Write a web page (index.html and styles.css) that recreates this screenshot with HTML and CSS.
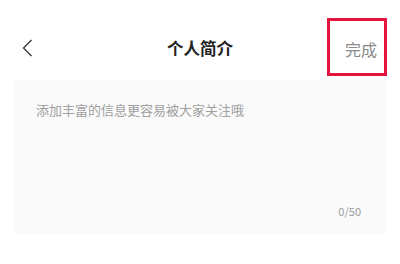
FILE: index.html
```html
<!DOCTYPE html>
<html lang="zh">
<head>
<meta charset="utf-8">
<link rel="stylesheet" href="styles.css">
</head>
<body>
<div class="page">
  <header class="nav">
    <div class="nav-left">
      <svg class="back" width="11" height="18" viewBox="0 0 11 18"><polyline points="9.5,1 1.5,9 9.5,17" fill="none" stroke="#333" stroke-width="1.3" stroke-linejoin="miter"/></svg>
    </div>
    <div class="nav-title">个人简介</div>
    <div class="nav-right"><span class="done">完成</span></div>
  </header>
  <div class="editor">
    <div class="placeholder">添加丰富的信息更容易被大家关注哦</div>
    <div class="counter">0/50</div>
  </div>
</div>
</body>
</html>
```
FILE: styles.css
```css
html, body {
  margin: 0;
  padding: 0;
  background: #fff;
}
.page {
  width: 400px;
  height: 264px;
  font-family: "Noto Sans CJK SC", "Noto Sans", sans-serif;
}
.nav {
  display: grid;
  grid-template-columns: 1fr auto 1fr;
  align-items: center;
  height: 64px;
  padding-top: 16px;
  box-sizing: content-box;
}
.nav-left {
  padding-left: 22px;
  display: flex;
  align-items: center;
}
.back {
  display: block;
}
.nav-title {
  font-size: 16.5px;
  line-height: 20px;
  font-weight: bold;
  color: #222;
}
.nav-right {
  display: flex;
  justify-content: flex-end;
  padding-right: 13px;
  align-self: start;
}
.done {
  display: block;
  margin-top: 2px;
  border: 3px solid #e2153f;
  padding: 20px 7px 16px 15px;
  font-size: 16px;
  line-height: 16px;
  color: #8a8a8a;
}
.editor {
  margin: 0 14px 0 15px;
  height: 153px;
  background: #fafafa;
  box-sizing: border-box;
  padding: 21px 25px 15px 21px;
  display: flex;
  flex-direction: column;
  justify-content: space-between;
}
.placeholder {
  font-size: 13px;
  line-height: 18px;
  color: #a0a0a0;
}
.counter {
  align-self: flex-end;
  font-size: 11px;
  line-height: 13px;
  color: #9a9a9a;
}
```
